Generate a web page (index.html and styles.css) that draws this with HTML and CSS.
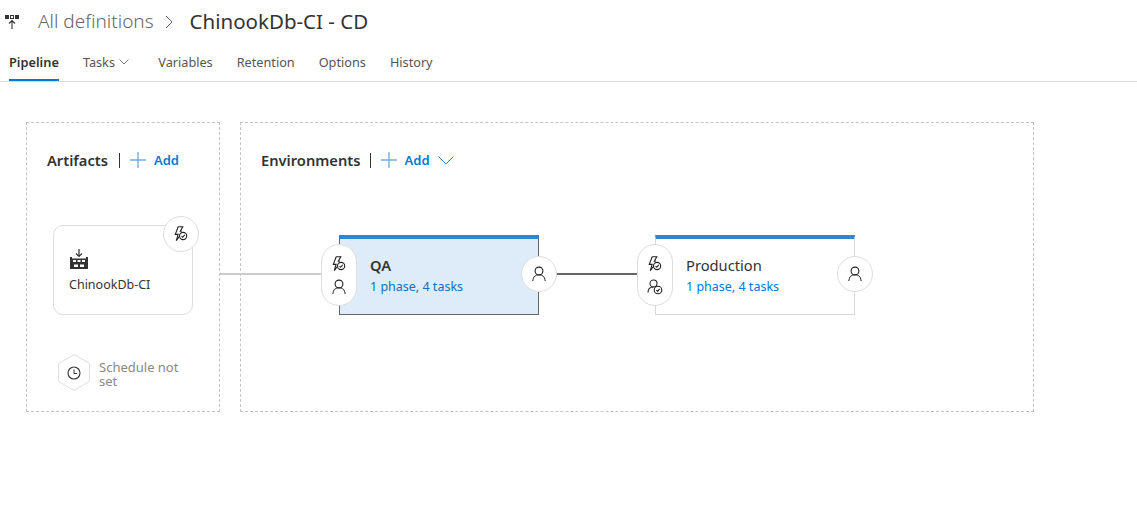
FILE: index.html
```html
<!DOCTYPE html>
<html lang="en">
<head>
  <meta charset="UTF-8" />
  <title>ChinookDb-CI - CD</title>
  <link rel="stylesheet" href="styles.css">
</head>
<body>
  <svg class="defs" width="0" height="0">
    <symbol id="bolt" viewBox="1.300 0 16 16">
      <path d="M6.500 .8h4.600L8.600 5.200h1.600M6.500 .8 3.600 8.400h2.800L4.600 14.600l3.400-4.600" fill="none" stroke="#222" stroke-width="1.100"/>
      <circle cx="11.400" cy="10" r="3.600" fill="none" stroke="#222" stroke-width="1.100"/>
      <path d="M9.800 10.200l1.200 1.100 2-2.400" fill="none" stroke="#222" stroke-width="1.100"/>
    </symbol>
    <symbol id="person" viewBox="0 0 16 16">
      <circle cx="8" cy="5" r="3.900" fill="none" stroke="#222" stroke-width="1.100"/>
      <path d="M1.800 15c0-3.600 2.600-6.200 6.200-6.200s6.200 2.600 6.200 6.200" fill="none" stroke="#222" stroke-width="1.100"/>
    </symbol>
    <symbol id="person-ok" viewBox="0 0 16 16">
      <circle cx="6.500" cy="4.500" r="3.500" fill="none" stroke="#222" stroke-width="1.100"/>
      <path d="M1 13.500c0-3.300 2.200-5.500 5.500-5.500" fill="none" stroke="#222" stroke-width="1.100"/>
      <circle cx="11" cy="11" r="3.800" fill="none" stroke="#222" stroke-width="1.100"/>
      <path d="M9.300 11.200l1.300 1.200 2-2.500" fill="none" stroke="#222" stroke-width="1.100"/>
    </symbol>
    <symbol id="plus" viewBox="0 0 16 16">
      <path d="M8 0v16M0 8h16" stroke="#71afe5" stroke-width="1.400" fill="none"/>
    </symbol>
  </svg>

  <header class="title-bar">
    <svg class="release-icon" width="15" height="15" viewBox="0 0 15 15">
      <rect x="0" y="0" width="4" height="4" fill="#333"/>
      <rect x="5.500" y=".5" width="3" height="3" fill="none" stroke="#333"/>
      <rect x="10" y="0" width="4" height="4" fill="#333"/>
      <path d="M7 14V6M4 8.500 7 5.500l3 3" fill="none" stroke="#333" stroke-width="1.100"/>
    </svg>
    <span class="crumb">All definitions</span>
    <svg class="crumb-sep" width="8" height="14" viewBox="0 0 8 14"><path d="M1 1l6 6-6 6" fill="none" stroke="#666"/></svg>
    <h1>ChinookDb-CI - CD</h1>
  </header>

  <nav class="tabs">
    <a class="tab active">Pipeline</a>
    <a class="tab tab-menu">Tasks <svg class="tab-caret" width="10" height="6" viewBox="0 0 10 6"><path d="M.5 .5 5 5 9.500 .5" fill="none" stroke="#777"/></svg></a>
    <a class="tab">Variables</a>
    <a class="tab">Retention</a>
    <a class="tab">Options</a>
    <a class="tab">History</a>
  </nav>

  <main class="canvas">
    <section class="box artifacts">
      <div class="box-head">
        <h2>Artifacts</h2>
        <span class="divider"></span>
        <svg class="plus" width="16" height="16"><use href="#plus"/></svg>
        <span class="add">Add</span>
      </div>

      <div class="artifact">
        <svg class="build-icon" width="18" height="20" viewBox="0 0 18 20">
          <path d="M9 0v7M6 4.500l3 3 3-3" fill="none" stroke="#333" stroke-width="1.200"/>
          <path d="M0 8h2v1.500h14V8h2v12H0z" fill="#333"/>
          <path d="M3 11h3v2H3zM7.500 11h3v2h-3zM12 11h3v2h-3zM4 15.500h4V18H4zM10 15.500h4V18h-4z" fill="#fff"/>
        </svg>
        <div class="artifact-name">ChinookDb-CI</div>
        <span class="round trigger"><svg width="16" height="16"><use href="#bolt"/></svg></span>
      </div>

      <div class="schedule">
        <svg width="32" height="37" viewBox="0 0 32 37">
          <path d="M16 .6 31.400 9.500v18L16 36.400 .6 27.500v-18z" fill="#fff" stroke="#ddd"/>
          <circle cx="16" cy="19" r="6" fill="none" stroke="#333" stroke-width="1.100"/>
          <path d="M16 15.500V19.500h3" fill="none" stroke="#333"/>
        </svg>
        <span class="schedule-text">Schedule not set</span>
      </div>
    </section>

    <section class="box environments">
      <div class="box-head">
        <h2>Environments</h2>
        <span class="divider"></span>
        <svg class="plus" width="16" height="16"><use href="#plus"/></svg>
        <span class="add">Add</span>
        <svg class="add-caret" width="16" height="9" viewBox="0 0 16 9"><path d="M.5 .5 8 8 15.500 .5" fill="none" stroke="#2b88d8"/></svg>
      </div>

      <div class="env-row">
        <div class="env selected">
          <span class="link link-in"></span>
          <span class="pill">
            <svg width="16" height="16"><use href="#bolt"/></svg>
            <svg width="16" height="16"><use href="#person"/></svg>
          </span>
          <div class="env-name">QA</div>
          <a class="env-tasks">1 phase, 4 tasks</a>
          <span class="round post"><svg width="16" height="16"><use href="#person"/></svg></span>
          <span class="link link-out"></span>
        </div>
        <div class="env">
          <span class="pill">
            <svg width="16" height="16"><use href="#bolt"/></svg>
            <svg width="16" height="16"><use href="#person-ok"/></svg>
          </span>
          <div class="env-name">Production</div>
          <a class="env-tasks">1 phase, 4 tasks</a>
          <span class="round post"><svg width="16" height="16"><use href="#person"/></svg></span>
        </div>
      </div>
    </section>
  </main>
</body>
</html>
```

FILE: styles.css
```css
* {
  box-sizing: border-box;
}

html, body {
  margin: 0;
  padding: 0;
  height: 100%;
  background-color: #fff;
  color: #333;
  font-family: "Noto Sans", "Open Sans", sans-serif;
  overflow: hidden;
}

.defs {
  display: block;
  height: 0;
}

.title-bar {
  display: flex;
  align-items: center;
  height: 44px;
  padding: 0 0 2px 5px;
}

.release-icon {
  margin-right: 18px;
  margin-top: 3px;
}

.crumb {
  font-size: 19px;
  font-weight: 300;
  color: #666;
}

.crumb-sep {
  margin: 2px 17px 0 11px;
}

h1 {
  margin: 0;
  font-size: 20.500px;
  font-weight: 400;
  color: #333;
}

.tabs {
  display: flex;
  height: 38px;
  padding-left: 9px;
  border-bottom: 1px solid #d8d8d8;
}

.tab {
  position: relative;
  display: block;
  margin-right: 24px;
  padding-top: 8px;
  font-size: 12.700px;
  line-height: 20px;
  color: #555;
}

.tab-menu {
  margin-right: 29px;
}

.tab.active {
  font-weight: 600;
  font-size: 12.800px;
  color: #333;
}

.tab.active::after {
  content: "";
  position: absolute;
  left: 0;
  right: 0;
  bottom: 0;
  height: 2px;
  background-color: #0078d7;
}

.tab-caret {
  margin-left: 1px;
  vertical-align: 2px;
}

.canvas {
  display: flex;
  gap: 20px;
  padding: 40px 0 0 26px;
}

.box {
  height: 290px;
  padding: 27px 20px 0;
  border: 1px dashed #c4c4c4;
}

.artifacts {
  position: relative;
  width: 194px;
}

.environments {
  width: 794px;
}

.box-head {
  display: flex;
  align-items: center;
  height: 20px;
}

h2 {
  margin: 0;
  font-size: 14.700px;
  font-weight: 600;
  color: #333;
}

.divider {
  width: 1px;
  height: 15px;
  margin: 0 10px;
  background-color: #333;
}

.artifacts .divider {
  margin-left: 11px;
}

.environments .divider {
  margin-left: 9px;
}

.plus {
  margin-right: 8px;
}

.add {
  font-size: 13px;
  font-weight: 600;
  color: #0078d7;
}

.add-caret {
  margin-left: 8px;
}

.artifact {
  position: relative;
  width: 140px;
  height: 90px;
  margin: 55px 0 0 6px;
  padding: 23px 15px 0;
  border: 1px solid #ddd;
  border-radius: 10px;
}

.build-icon {
  display: block;
  margin-left: 1px;
}

.artifact-name {
  margin-top: 6px;
  font-size: 12.500px;
  line-height: 20px;
  color: #333;
}

.round {
  position: absolute;
  display: flex;
  align-items: center;
  justify-content: center;
  width: 36px;
  height: 36px;
  background-color: #fff;
  border: 1px solid #ddd;
  border-radius: 50%;
  z-index: 2;
}

.trigger {
  top: -10px;
  right: -7px;
}

.schedule {
  display: flex;
  align-items: center;
  gap: 9px;
  margin: 39px 0 0 11px;
}

.schedule-text {
  width: 92px;
  padding-top: 2px;
  font-size: 13px;
  line-height: 14px;
  color: #888;
}

.env-row {
  display: flex;
  gap: 116px;
  margin: 65px 0 0 78px;
}

.env {
  position: relative;
  width: 200px;
  height: 80px;
  padding: 16px 0 0 30px;
  border: 1px solid #d8d8d8;
  border-top: 4px solid #2b88d8;
}

.env.selected {
  background-color: #deecf9;
  border-color: #666;
  border-top-color: #2b88d8;
}

.env-name {
  font-size: 14.700px;
  line-height: 20px;
  color: #333;
}

.selected .env-name {
  font-weight: 600;
}

.env-tasks {
  display: block;
  margin-top: 2px;
  font-size: 12.500px;
  line-height: 20px;
  color: #0078d7;
}

.selected .env-tasks {
  color: #106ebe;
}

.pill {
  position: absolute;
  left: -19px;
  top: 5px;
  display: flex;
  flex-direction: column;
  align-items: center;
  justify-content: center;
  gap: 7px;
  width: 36px;
  height: 62px;
  background-color: #fff;
  border: 1px solid #ddd;
  border-radius: 18px;
  z-index: 2;
}

.post {
  top: 17px;
  right: -19px;
}

/* connectors between the nodes */
.link {
  position: absolute;
  height: 2px;
  z-index: 1;
}

.link-in {
  left: -120px;
  width: 102px;
  top: 34px;
  background-color: #ccc;
}

.link-out {
  left: 216px;
  width: 82px;
  top: 34px;
  background-color: #666;
}
```
